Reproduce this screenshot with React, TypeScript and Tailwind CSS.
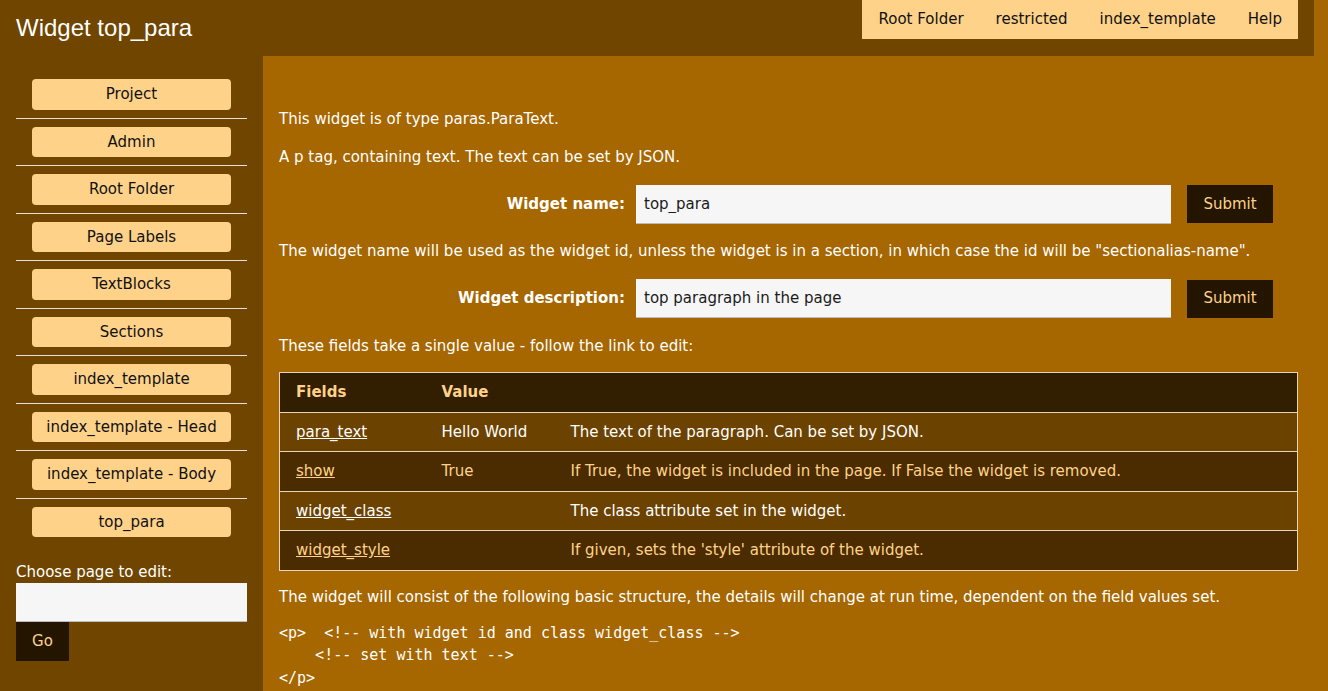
import React from "react";

const navItems = ["Root Folder", "restricted", "index_template", "Help"];
const sideItems = [
  "Project",
  "Admin",
  "Root Folder",
  "Page Labels",
  "TextBlocks",
  "Sections",
  "index_template",
  "index_template - Head",
  "index_template - Body",
  "top_para",
];

const rows = [
  { f: "para_text", v: "Hello World", d: "The text of the paragraph. Can be set by JSON.", light: true },
  { f: "show", v: "True", d: "If True, the widget is included in the page. If False the widget is removed.", light: false },
  { f: "widget_class", v: "", d: "The class attribute set in the widget.", light: true },
  { f: "widget_style", v: "", d: "If given, sets the 'style' attribute of the widget.", light: false },
];

function FormRow({ label, value }: { label: string; value: string }) {
  return (
    <div className="flex items-center h-[42px] my-[15px]">
      <label className="flex-1 text-right font-bold text-white pr-[11px]">{label}</label>
      <input
        readOnly
        value={value}
        className="w-[535px] h-[39px] bg-[#f6f6f6] text-[#1b1b1b] pl-2 border-0 border-b border-[#bdbdbd] outline-none text-[15px] font-['DejaVu_Sans',sans-serif]"
      />
      <button className="ml-4 mr-[25px] w-[86px] h-[38px] bg-[#231500] text-[#ffd28a] text-[15px]">Submit</button>
    </div>
  );
}

export default function App() {
  return (
    <div className="min-h-[691px] bg-[#a66600] font-['DejaVu_Sans',sans-serif] text-[15px] leading-[22.5px] flex flex-col">
      <header className="w-[1314px] h-[56px] bg-[#6f4500] flex justify-between items-start pr-4">
        <h1 className="self-center pl-4 text-[24px] leading-[28px] text-white font-['Liberation_Sans',Arial,sans-serif]">
          Widget top_para
        </h1>
        <nav className="h-[39px] bg-[#ffd28a] flex items-center">
          {navItems.map((n) => (
            <a key={n} className="px-4 text-[#111]">
              {n}
            </a>
          ))}
        </nav>
      </header>
      <div className="flex flex-1">
        <aside className="w-[263px] bg-[#6f4500] pl-4 pr-4 pt-[15px] shrink-0">
          <ul>
            {sideItems.map((s, i) => (
              <li
                key={s}
                className={
                  "py-2 px-4 " + (i < sideItems.length - 1 ? "border-b border-[#e8e0d2]" : "")
                }
              >
                <div className="h-[30.5px] rounded-[4px] bg-[#ffd28a] text-[#111] flex items-center justify-center">
                  {s}
                </div>
              </li>
            ))}
          </ul>
          <div className="mt-[15.5px] text-white">Choose page to edit:</div>
          <input
            readOnly
            className="block w-[231px] h-[39px] bg-[#f6f6f6] border-0 border-b border-[#bdbdbd] outline-none"
          />
          <button className="w-[53px] h-[39px] bg-[#231500] text-[#ffd28a]">Go</button>
        </aside>
        <main className="flex-1 pl-4 pr-[30px] pt-[52px] text-white">
          <p className="mb-[15px]">This widget is of type paras.ParaText.</p>
          <p>A p tag, containing text. The text can be set by JSON.</p>
          <FormRow label="Widget name:" value="top_para" />
          <p>
            The widget name will be used as the widget id, unless the widget is in a section, in which case the id will be "sectionalias-name".
          </p>
          <FormRow label="Widget description:" value="top paragraph in the page" />
          <p className="mb-[15px]">These fields take a single value - follow the link to edit:</p>
          <table className="w-full border-collapse border border-[#e6d6b8]">
            <thead>
              <tr className="bg-[#321e00] text-[#ffd28a] font-bold text-left">
                <th className="w-[146px] h-[39.5px] pl-4 border-b border-[#e6d6b8]">Fields</th>
                <th className="w-[129px] pl-4 border-b border-[#e6d6b8]">Value</th>
                <th className="border-b border-[#e6d6b8]"></th>
              </tr>
            </thead>
            <tbody>
              {rows.map((r) => (
                <tr
                  key={r.f}
                  className={
                    (r.light ? "bg-[#6b4200] text-white" : "bg-[#4a2c00] text-[#ffd28a]") +
                    " border-b border-[#e6d6b8]"
                  }
                >
                  <td className="h-[39.5px] pl-4">
                    <a className="underline">{r.f}</a>
                  </td>
                  <td className="pl-4">{r.v}</td>
                  <td className="pl-4">{r.d}</td>
                </tr>
              ))}
            </tbody>
          </table>
          <p className="mt-[15px] mb-[13.5px]">
            The widget will consist of the following basic structure, the details will change at run time, dependent on the field values set.
          </p>
          <pre className="font-['DejaVu_Sans_Mono',monospace] text-[15px] leading-[22.5px] text-white">
{`<p>  <!-- with widget id and class widget_class -->
    <!-- set with text -->
</p>`}
          </pre>
        </main>
      </div>
    </div>
  );
}
